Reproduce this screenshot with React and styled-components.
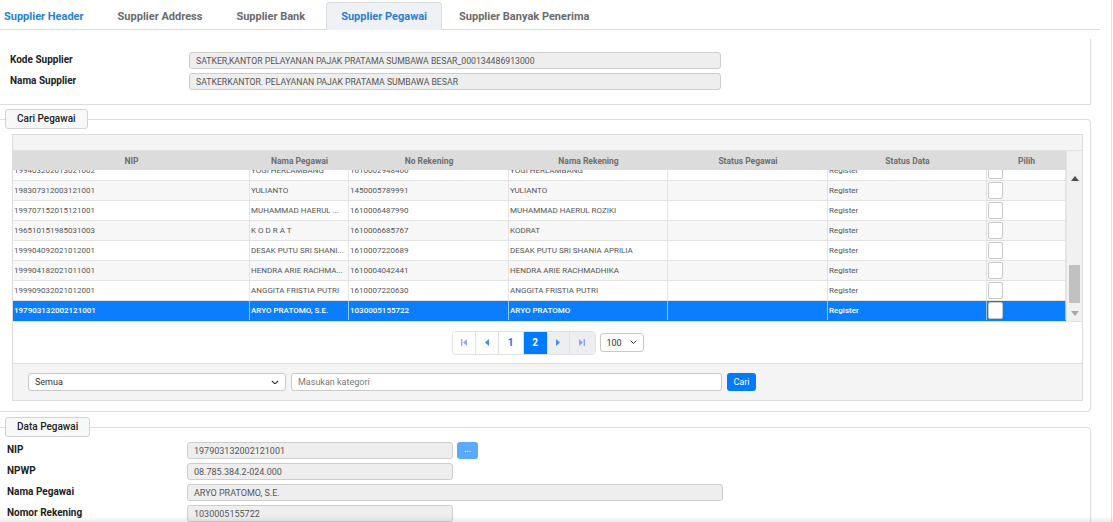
import React from "react";
import styled, { createGlobalStyle } from "styled-components";

const GlobalStyle = createGlobalStyle`
  html, body {
    margin: 0;
    padding: 0;
    background: #fff;
  }
  body {
    font-family: Roboto, "Liberation Sans", sans-serif;
    color: #333;
    overflow: hidden;
  }
  * {
    box-sizing: border-box;
  }
`;

const Page = styled.div`
  width: 1112px;
  height: 522px;
  border-right: 1px solid #e3e3e3;
  overflow: hidden;
`;

const TabBar = styled.div`
  display: flex;
  align-items: flex-end;
  width: 1100px;
  height: 30px;
  border-bottom: 1px solid #dcdcdc;
`;

const Tab = styled.div`
  display: flex;
  align-items: center;
  height: 27px;
  padding: 1px 17px 0;
  font-size: 11px;
  font-weight: 700;
  color: ${(p) => (p.$blue ? "#2a7fd3" : "#6b6b6b")};
  &:first-child {
    padding-left: 4px;
  }
`;

const ActiveTab = styled(Tab)`
  margin-left: 4px;
  margin-bottom: -1px;
  height: 28px;
  padding: 0 14px;
  background: #eef1f5;
  border: 1px solid #dcdcdc;
  border-bottom: none;
  border-radius: 4px 4px 0 0;
  color: #2a7fd3;
`;

const InfoSection = styled.div`
  display: flex;
  flex-direction: column;
  gap: 4px;
  width: 1091px;
  margin-top: 9px;
  padding: 13px 0 14px 10px;
  border-right: 1px solid #dcdcdc;
  border-bottom: 1px solid #dcdcdc;
`;

const FormRow = styled.div`
  display: grid;
  grid-template-columns: ${(p) => p.$label}px auto;
  align-items: start;
`;

const Label = styled.div`
  padding-top: 2px;
  font-size: 10px;
  font-weight: 700;
  color: #222;
`;

const Field = styled.div`
  display: flex;
  align-items: center;
  width: ${(p) => p.$w}px;
  height: 17px;
  padding: 0 6px;
  background: #eeeeee;
  border: 1px solid #cdcdcd;
  border-radius: 3px;
  font-size: ${(p) => p.$fs || 9}px;
  color: #555;
  white-space: nowrap;
`;

const FieldGroup = styled.div`
  display: flex;
  gap: 4px;
`;

const DotsButton = styled.div`
  display: flex;
  align-items: center;
  justify-content: center;
  width: 21px;
  height: 17px;
  background: #5aaaff;
  border-radius: 3px;
  color: #fff;
  font-size: 8px;
  font-weight: 700;
  line-height: 1;
  padding-bottom: 2px;
`;

const Fieldset = styled.fieldset`
  width: 1091px;
  min-width: 0;
  margin: ${(p) => p.$mt}px 0 0 0;
  padding: ${(p) => p.$pad};
  border: 1px solid #dcdcdc;
  border-left: none;
  border-radius: 0 4px 4px 0;
`;

const Legend = styled.legend`
  margin-left: ${(p) => p.$ml}px;
  height: 20px;
  padding: 0 11px;
  line-height: 18px;
  background: #f8f8f8;
  border: 1px solid #d3d3d3;
  border-radius: 3px;
  font-size: 10px;
  font-weight: 500;
  color: #222;
`;

const DataRows = styled.div`
  display: flex;
  flex-direction: column;
  gap: 4px;
`;

const Grid = styled.div`
  border: 1px solid #dcdcdc;
  background: #fff;
`;

const GridToolbar = styled.div`
  height: 16px;
  background: #f4f4f4;
  border-bottom: 1px solid #e2e2e2;
`;

const COLS = "237px 99px 160px 159px 160px 159px 79px";

const HeadRow = styled.div`
  display: flex;
  height: 19px;
`;

const HeadCells = styled.div`
  display: grid;
  grid-template-columns: ${COLS};
  width: 1053px;
  background: #dcdcdc;
`;

const HeadCell = styled.div`
  display: flex;
  align-items: center;
  justify-content: center;
  font-size: 8.5px;
  font-weight: 700;
  color: #6e6e6e;
`;

const HeadCorner = styled.div`
  flex: 1;
  background: #f3f3f3;
  border-left: 1px solid #e2e2e2;
`;

const BodyWrap = styled.div`
  display: flex;
  height: 151px;
`;

const Viewport = styled.div`
  width: 1053px;
  overflow: hidden;
`;

const BodyInner = styled.div`
  margin-top: -9px;
`;

const Row = styled.div`
  display: grid;
  grid-template-columns: ${COLS};
  height: 20px;
  background: ${(p) => (p.$sel ? "#0a7efc" : p.$alt ? "#f7f7f7" : "#fff")};
  border-bottom: 1px solid ${(p) => (p.$sel ? "#0a7efc" : "#e3e3e3")};
`;

const Cell = styled.div`
  min-width: 0;
  padding-left: 1px;
  line-height: 19px;
  border-right: 1px solid ${(p) => (p.$sel ? "rgba(255,255,255,0.55)" : "#e3e3e3")};
  font-size: 8px;
  color: ${(p) => (p.$sel ? "#fff" : "#555")};
  font-weight: ${(p) => (p.$sel ? 500 : 400)};
  white-space: nowrap;
  overflow: hidden;
`;

const Check = styled.div`
  width: 15px;
  height: 17px;
  margin-top: 1px;
  background: #fff;
  border: 1px solid #c9c9c9;
  border-radius: 2px;
`;

const ScrollTrack = styled.div`
  display: flex;
  flex-direction: column;
  flex: 1;
  background: #f1f1f1;
  border-left: 1px solid #e6e6e6;
`;

const ScrollArrow = styled.div`
  display: flex;
  align-items: center;
  justify-content: center;
  height: 16px;
  margin-top: ${(p) => p.$mt || 0}px;
  &::after {
    content: "";
    border-left: 4px solid transparent;
    border-right: 4px solid transparent;
    ${(p) =>
      p.$down
        ? "border-top: 5px solid #a8a8a8;"
        : "border-bottom: 5px solid #4d4d4d;"}
  }
`;

const ScrollThumb = styled.div`
  margin: auto 2px 0 2px;
  height: 38px;
  background: #c1c1c1;
`;

const PagerArea = styled.div`
  display: flex;
  align-items: center;
  justify-content: center;
  gap: 4px;
  height: 42px;
  border-top: 1px solid #e3e3e3;
`;

const Pager = styled.div`
  display: flex;
  height: 24px;
  border: 1px solid #dee2e6;
  border-radius: 4px;
  overflow: hidden;
`;

const PageBtn = styled.div`
  display: flex;
  align-items: center;
  justify-content: center;
  width: ${(p) => p.$w}px;
  background: ${(p) => (p.$active ? "#007bff" : p.$off ? "#eceeef" : "#fff")};
  color: ${(p) => (p.$active ? "#fff" : "#007bff")};
  font-size: 10px;
  font-weight: 700;
  & + & {
    border-left: 1px solid #dee2e6;
  }
`;

const SelectBox = styled.div`
  display: flex;
  align-items: center;
  justify-content: space-between;
  width: ${(p) => p.$w}px;
  height: ${(p) => p.$h}px;
  padding: 0 6px;
  background: #fff;
  border: 1px solid #c9c9c9;
  border-radius: 3px;
  font-size: 9px;
  color: #333;
`;

const FilterBar = styled.div`
  display: flex;
  align-items: center;
  gap: 5px;
  height: 37px;
  padding: 0 15px;
  background: #f4f4f4;
  border-top: 1px solid #dcdcdc;
`;

const TextInput = styled.div`
  display: flex;
  align-items: center;
  width: 431px;
  height: 18px;
  padding: 0 6px;
  background: #fff;
  border: 1px solid #c9c9c9;
  border-radius: 3px;
  font-size: 9px;
  color: #777;
`;

const BlueButton = styled.div`
  display: flex;
  align-items: center;
  justify-content: center;
  width: 29px;
  height: 18px;
  background: #007bff;
  border-radius: 3px;
  color: #fff;
  font-size: 9px;
`;

const BottomFade = styled.div`
  position: fixed;
  left: 0;
  right: 0;
  bottom: 0;
  height: 6px;
  background: linear-gradient(rgba(0, 0, 0, 0), rgba(0, 0, 0, 0.07));
  pointer-events: none;
`;

const Chevron = ({ size = 8 }) => (
  <svg width={size} height={size * 0.6} viewBox="0 0 10 6">
    <path d="M1 1l4 4 4-4" fill="none" stroke="#333" strokeWidth="1.4" />
  </svg>
);

const PagerIcon = ({ kind, color }) => {
  const left = kind === "first" || kind === "prev";
  const bar = kind === "first" || kind === "last";
  return (
    <svg width="6" height="7" viewBox="0 0 6 7">
      {left ? (
        <path d={bar ? "M6 0v7L2 3.5z" : "M5 0v7L1 3.5z"} fill={color} />
      ) : (
        <path d={bar ? "M0 0v7l4-3.5z" : "M1 0v7l4-3.5z"} fill={color} />
      )}
      {bar && <rect x={left ? 0 : 4.6} y="0" width="1.4" height="7" fill={color} />}
    </svg>
  );
};

const rows = [
  { nip: "199403202013021002", nama: "YOGI HERLAMBANG", rek: "1610002948466", namaRek: "YOGI HERLAMBANG" },
  { nip: "198307312003121001", nama: "YULIANTO", rek: "1450005789991", namaRek: "YULIANTO" },
  { nip: "199707152015121001", nama: "MUHAMMAD HAERUL ...", rek: "1610006487990", namaRek: "MUHAMMAD HAERUL ROZIKI" },
  { nip: "196510151985031003", nama: "K O D R A T", rek: "1610006685767", namaRek: "KODRAT" },
  { nip: "199904092021012001", nama: "DESAK PUTU SRI SHANI...", rek: "1610007220689", namaRek: "DESAK PUTU SRI SHANIA APRILIA" },
  { nip: "199904182021011001", nama: "HENDRA ARIE RACHMA...", rek: "1610004042441", namaRek: "HENDRA ARIE RACHMADHIKA" },
  { nip: "199909032021012001", nama: "ANGGITA FRISTIA PUTRI", rek: "1610007220630", namaRek: "ANGGITA FRISTIA PUTRI" },
  { nip: "197903132002121001", nama: "ARYO PRATOMO, S.E.", rek: "1030005155722", namaRek: "ARYO PRATOMO", sel: true },
];

const headers = ["NIP", "Nama Pegawai", "No Rekening", "Nama Rekening", "Status Pegawai", "Status Data", "Pilih"];

const App = () => {
  return (
    <Page>
      <GlobalStyle />
      <TabBar>
        <Tab $blue>Supplier Header</Tab>
        <Tab>Supplier Address</Tab>
        <Tab>Supplier Bank</Tab>
        <ActiveTab>Supplier Pegawai</ActiveTab>
        <Tab>Supplier Banyak Penerima</Tab>
      </TabBar>

      <InfoSection>
        <FormRow $label={179}>
          <Label>Kode Supplier</Label>
          <Field $w={532} $fs={8.7}>
            SATKER,KANTOR PELAYANAN PAJAK PRATAMA SUMBAWA BESAR_000134486913000
          </Field>
        </FormRow>
        <FormRow $label={179}>
          <Label>Nama Supplier</Label>
          <Field $w={532} $fs={8.7}>
            SATKERKANTOR. PELAYANAN PAJAK PRATAMA SUMBAWA BESAR
          </Field>
        </FormRow>
      </InfoSection>

      <Fieldset $mt={4} $pad="5px 7px 10px 12px">
        <Legend $ml={-7}>Cari Pegawai</Legend>
        <Grid>
          <GridToolbar />
          <HeadRow>
            <HeadCells>
              {headers.map((h) => (
                <HeadCell key={h}>{h}</HeadCell>
              ))}
            </HeadCells>
            <HeadCorner />
          </HeadRow>
          <BodyWrap>
            <Viewport>
              <BodyInner>
                {rows.map((r, i) => (
                  <Row key={r.nip} $alt={i % 2 === 1} $sel={r.sel}>
                    <Cell $sel={r.sel}>{r.nip}</Cell>
                    <Cell $sel={r.sel}>{r.nama}</Cell>
                    <Cell $sel={r.sel}>{r.rek}</Cell>
                    <Cell $sel={r.sel}>{r.namaRek}</Cell>
                    <Cell $sel={r.sel} />
                    <Cell $sel={r.sel}>Register</Cell>
                    <Cell $sel={r.sel}>
                      <Check />
                    </Cell>
                  </Row>
                ))}
              </BodyInner>
            </Viewport>
            <ScrollTrack>
              <ScrollArrow />
              <ScrollThumb />
              <ScrollArrow $down $mt={2} />
            </ScrollTrack>
          </BodyWrap>
          <PagerArea>
            <Pager>
              <PageBtn $w={22}>
                <PagerIcon kind="first" color="#9aa6f2" />
              </PageBtn>
              <PageBtn $w={23}>
                <PagerIcon kind="prev" color="#3f8ef0" />
              </PageBtn>
              <PageBtn $w={25}>1</PageBtn>
              <PageBtn $w={24} $active>
                2
              </PageBtn>
              <PageBtn $w={22} $off>
                <PagerIcon kind="next" color="#3f8ef0" />
              </PageBtn>
              <PageBtn $w={26} $off>
                <PagerIcon kind="last" color="#8fa4f0" />
              </PageBtn>
            </Pager>
            <SelectBox $w={44} $h={19}>
              100
              <Chevron size={7} />
            </SelectBox>
          </PagerArea>
          <FilterBar>
            <SelectBox $w={258} $h={18}>
              Semua
              <Chevron size={8} />
            </SelectBox>
            <TextInput>Masukan kategori</TextInput>
            <BlueButton>Cari</BlueButton>
          </FilterBar>
        </Grid>
      </Fieldset>

      <Fieldset $mt={5} $pad="5px 7px 10px 7px">
        <Legend $ml={-2}>Data Pegawai</Legend>
        <DataRows>
          <FormRow $label={180}>
            <Label>NIP</Label>
            <FieldGroup>
              <Field $w={266}>197903132002121001</Field>
              <DotsButton>...</DotsButton>
            </FieldGroup>
          </FormRow>
          <FormRow $label={180}>
            <Label>NPWP</Label>
            <Field $w={266}>08.785.384.2-024.000</Field>
          </FormRow>
          <FormRow $label={180}>
            <Label>Nama Pegawai</Label>
            <Field $w={536}>ARYO PRATOMO, S.E.</Field>
          </FormRow>
          <FormRow $label={180}>
            <Label>Nomor Rekening</Label>
            <Field $w={266}>1030005155722</Field>
          </FormRow>
        </DataRows>
      </Fieldset>
      <BottomFade />
    </Page>
  );
};

export default App;
